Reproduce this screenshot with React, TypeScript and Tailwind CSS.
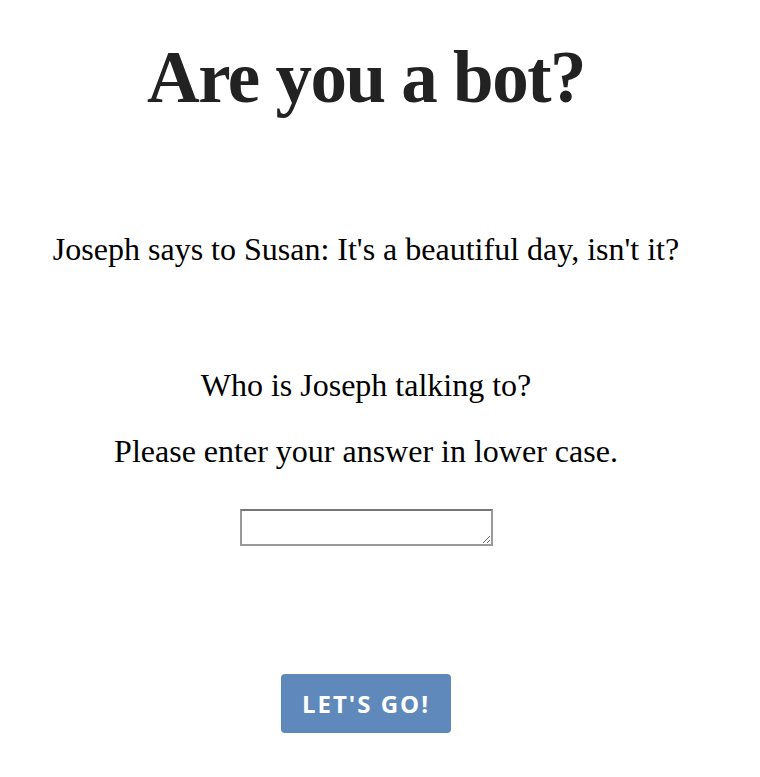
export default function App() {
  return (
    <div className="w-[732px] flex flex-col items-center text-center bg-white min-h-[777px]">
      <h1 className="mt-[42px] text-[73px] leading-[72px] font-bold tracking-[-1.5px] text-[#222222] font-['Liberation_Serif',serif]">
        Are you a bot?
      </h1>
      <div className="font-['Liberation_Serif','Times_New_Roman',serif] text-[32px] leading-[37px] text-black flex flex-col items-center">
        <p className="mt-[117px]">Joseph says to Susan: It's a beautiful day, isn't it?</p>
        <p className="mt-[99px]">Who is Joseph talking to?</p>
        <p className="mt-[29px]">Please enter your answer in lower case.</p>
      </div>
      <textarea className="mt-[39px] w-[253px] h-[37px] border-2 border-t-[#767676] border-x-[#9a9a9a] border-b-[#9a9a9a] bg-white resize" aria-label="answer" />
      <button className="mt-[128px] w-[170px] h-[59px] rounded-[4px] bg-[#5e89ba] text-white font-['Open_Sans',sans-serif] font-bold text-[24px] tracking-[2px] uppercase">
        Let's go!
      </button>
    </div>
  );
}
